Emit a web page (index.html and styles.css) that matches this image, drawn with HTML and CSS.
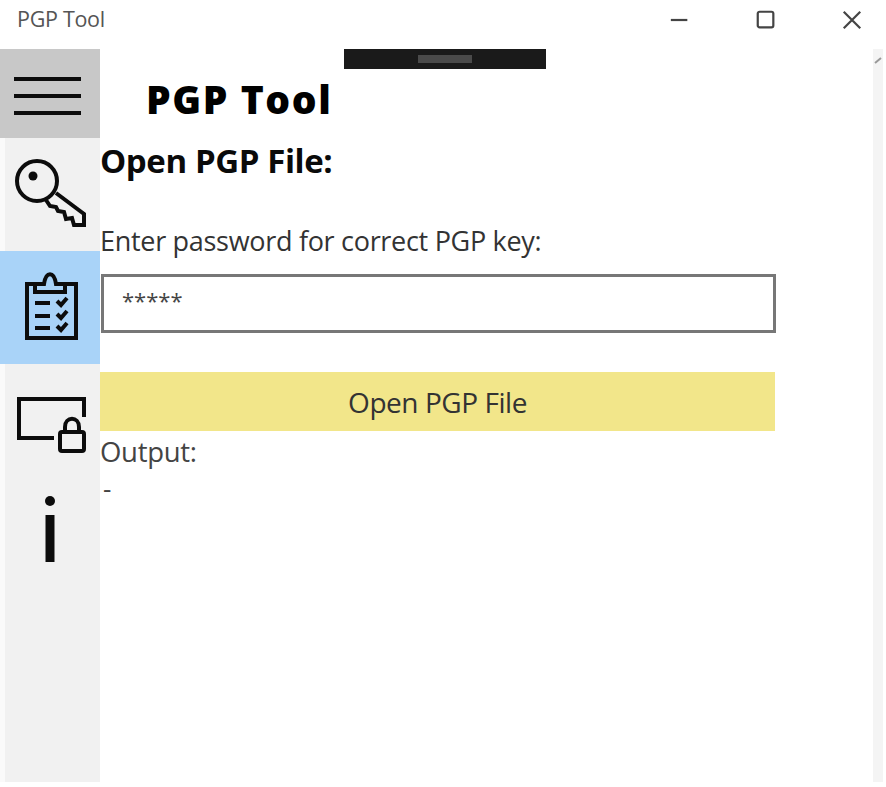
FILE: index.html
```html
<!DOCTYPE html>
<html lang="en">
<head>
    <meta charset="UTF-8">
    <meta name="viewport" content="width=device-width, initial-scale=1.0">
    <title>PGP Tool</title>
    <link rel="stylesheet" href="styles.css">
</head>
<body>
    <div class="titlebar">
        <span class="window-title">PGP Tool</span>
        <div class="window-buttons">
            <svg class="win-icon" viewBox="0 0 24 24"><path d="M2 12H20"/></svg>
            <svg class="win-icon" viewBox="0 0 24 24"><rect x="3" y="3" width="17" height="17" rx="2"/></svg>
            <svg class="win-icon" viewBox="0 0 24 24"><path d="M3 3L21 21M21 3L3 21"/></svg>
        </div>
    </div>

    <div class="debug-bar"><span class="debug-grip"></span></div>

    <div class="app">
        <nav class="sidebar">
            <div class="nav-item nav-menu">
                <svg class="nav-icon" viewBox="0 0 100 89"><path d="M14 30H81M14 47H81M14 64H81"/></svg>
            </div>
            <div class="nav-item nav-plain">
                <svg class="nav-icon" viewBox="5 0 95 113"><circle cx="37" cy="43" r="20"/><circle class="dot" cx="33" cy="38" r="4.5"/><path d="M56 55L84 76V87H74L72 80L66 81L64 74L58 73L56 69L50 68L46 62"/></svg>
            </div>
            <div class="nav-item nav-active">
                <svg class="nav-icon" viewBox="0 0 100 113"><path d="M35 33H27V87H76V33H65"/><path d="M35 41V33H44C46 20 54 20 56 33H65V41Z"/><path d="M35 52H50M35 65H50M35 77H50M57 50L61 54L67 47M57 63L61 67L67 60M57 75L61 79L67 72"/></svg>
            </div>
            <div class="nav-item nav-plain">
                <svg class="nav-icon" viewBox="5 0 95 113"><path d="M54 74H19V35H84V53"/><rect x="60" y="68" width="24" height="19" rx="2"/><path d="M65 68V63C65 52 79 52 79 63V68"/></svg>
            </div>
            <div class="nav-item nav-plain nav-info">
                <svg class="nav-icon" viewBox="5 0 95 113"><circle class="dot" cx="50" cy="24" r="5"/><path class="stem" d="M50 38V85"/></svg>
            </div>
        </nav>

        <main class="content">
            <h1 class="app-title">PGP Tool</h1>
            <h2 class="section-title">Open PGP File:</h2>
            <label class="field-label" for="password">Enter password for correct PGP key:</label>
            <input class="password-input" id="password" type="text" value="*****">
            <button class="button">Open PGP File</button>
            <div class="output-label">Output:</div>
            <div class="output-value">-</div>
        </main>

        <div class="scrollbar">
            <svg class="scroll-arrow" viewBox="0 0 10 10"><path d="M2 8L8 3"/></svg>
        </div>
    </div>
</body>
</html>
```

FILE: styles.css
```css
html, body { height: 100%; }
body { margin: 0; background: #fff; font-family: 'Open Sans', 'Noto Sans', sans-serif; color: #222; display: flex; flex-direction: column; overflow: hidden; position: relative; }

.titlebar { height: 49px; flex: none; display: flex; align-items: flex-start; justify-content: space-between; }
.window-title { font-size: 21.5px; line-height: 26px; margin: 6px 0 0 17px; color: #555; letter-spacing: -0.3px; }
.window-buttons { display: flex; gap: 64px; margin: 9px 23px 0 0; }
.win-icon { width: 22px; height: 22px; fill: none; stroke: #444; stroke-width: 2.4; }

.debug-bar { position: absolute; left: 344px; top: 49px; width: 202px; height: 20px; background: #1a1a1a; display: flex; align-items: center; justify-content: center; }
.debug-grip { width: 54px; height: 8px; background: #4a4a4a; }

.app { flex: 1; display: flex; min-height: 0; }

.sidebar { width: 100px; flex: none; display: flex; flex-direction: column; background: #f1f1f1; margin-bottom: 5px; }
.nav-item { display: block; height: 113px; flex: none; }
.nav-menu { height: 89px; background: #c8c8c8; }
.nav-active { background: #a9d3f8; }
.nav-plain { border-left: 5px solid #fafafa; }
.nav-info { flex: 1; }
.nav-icon { display: block; width: 100%; height: 100%; fill: none; stroke: #0c0c0c; stroke-width: 4; }
.nav-info .nav-icon { height: 113px; }
.nav-icon .dot { fill: #0c0c0c; stroke: none; }
.nav-icon .stem { stroke-width: 9; }

.content { flex: 1; min-width: 0; padding-right: 98px; }
.app-title { margin: 26px 0 0 46px; font-size: 39px; line-height: 48px; font-weight: 800; color: #000; letter-spacing: 1.6px; }
.section-title { margin: 18px 0 0; font-size: 33px; line-height: 40px; font-weight: 700; color: #0a0a0a; letter-spacing: -0.4px; }
.field-label { display: block; margin-top: 44px; font-size: 27px; line-height: 32px; color: #333; letter-spacing: -0.3px; }
.password-input { display: block; box-sizing: border-box; width: 100%; height: 59px; margin: 17px 0 0 1px; padding: 0 0 8px 18px; border: 3px solid #777; border-radius: 0; background: #fff; font-family: inherit; font-size: 22px; color: #444; outline: none; }
.button { display: block; width: 100%; height: 59px; margin-top: 39px; border: none; padding: 0; background: #f2e68a; font-family: inherit; font-size: 28px; letter-spacing: -0.45px; color: #333; cursor: pointer; }
.output-label { margin-top: 4px; font-size: 27.5px; line-height: 33px; color: #444; letter-spacing: -0.3px; }
.output-value { margin: 6px 0 0 3px; font-size: 26px; line-height: 28px; color: #444; }

.scrollbar { width: 10px; flex: none; margin: 0 3px 5px 0; background: #f4f4f4; }
.scroll-arrow { display: block; width: 10px; height: 10px; margin-top: 6px; fill: none; stroke: #999; stroke-width: 2; }
```
